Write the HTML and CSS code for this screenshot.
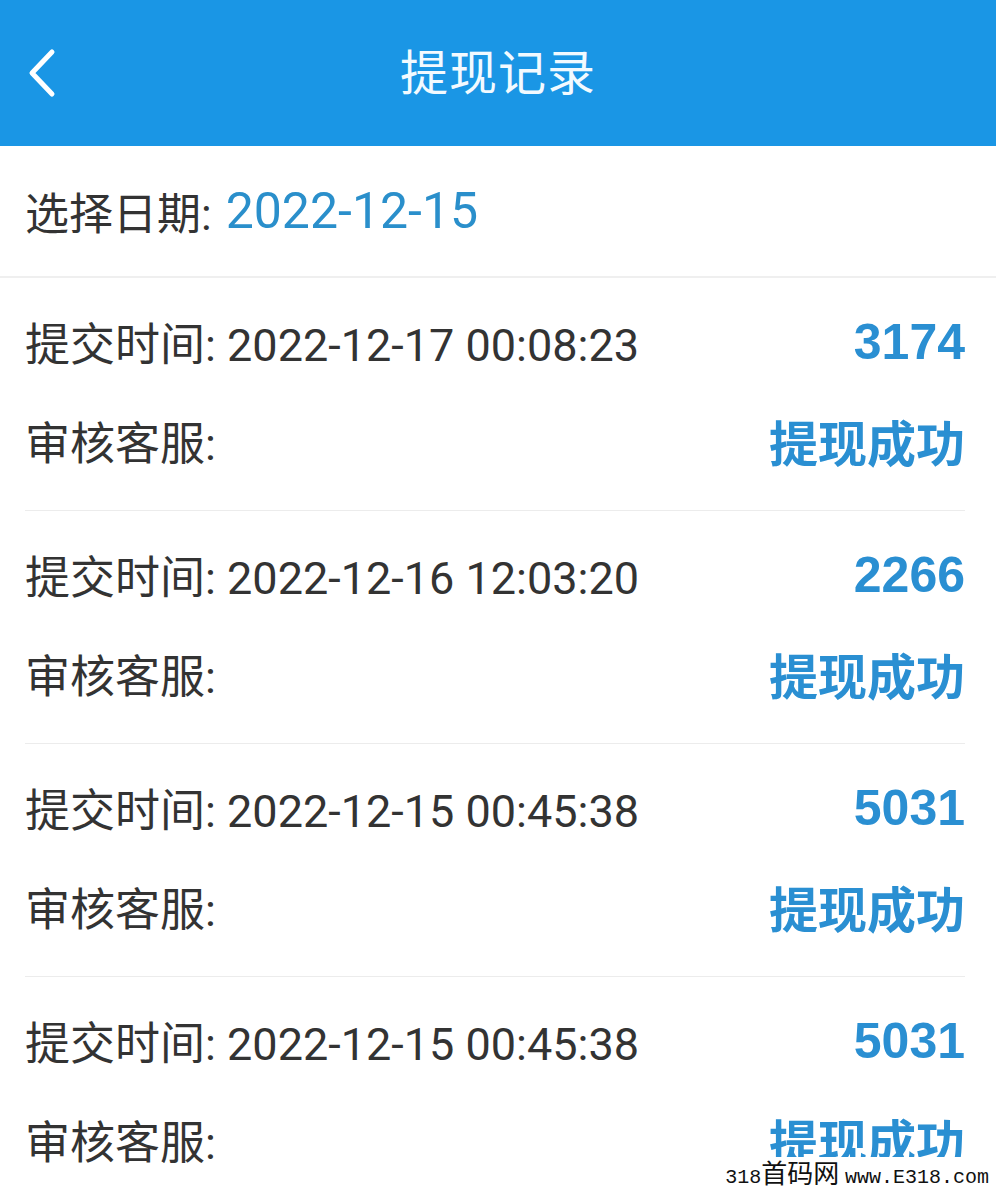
FILE: index.html
```html
<!DOCTYPE html>
<html>
<head>
  <meta charset="UTF-8">
  <meta name="viewport" content="width=device-width, initial-scale=1.0">
  <title>提现记录</title>
  <link rel="stylesheet" href="styles.css">
</head>
<body>
  <div class="app">
    <div class="topbar">
      <button class="back" aria-label="返回">
        <svg width="36" height="52" viewBox="0 0 36 52">
          <path d="M27 5 L7 26 L27 47" fill="none" stroke="#fff" stroke-width="5" stroke-linecap="round" stroke-linejoin="round"/>
        </svg>
      </button>
      <h1>提现记录</h1>
      <span></span>
    </div>

    <div class="date-row">
      选择日期: <span class="date">2022-12-15</span>
    </div>

    <ul class="records">
      <li>
        <div class="line">
          <span>提交时间: 2022-12-17 00:08:23</span>
          <span class="amount">3174</span>
        </div>
        <div class="line">
          <span>审核客服:</span>
          <span class="status">提现成功</span>
        </div>
      </li>
      <li>
        <div class="line">
          <span>提交时间: 2022-12-16 12:03:20</span>
          <span class="amount">2266</span>
        </div>
        <div class="line">
          <span>审核客服:</span>
          <span class="status">提现成功</span>
        </div>
      </li>
      <li>
        <div class="line">
          <span>提交时间: 2022-12-15 00:45:38</span>
          <span class="amount">5031</span>
        </div>
        <div class="line">
          <span>审核客服:</span>
          <span class="status">提现成功</span>
        </div>
      </li>
      <li>
        <div class="line">
          <span>提交时间: 2022-12-15 00:45:38</span>
          <span class="amount">5031</span>
        </div>
        <div class="line">
          <span>审核客服:</span>
          <span class="status">提现成功</span>
        </div>
      </li>
    </ul>

    <div class="watermark"><span class="wm-num">318</span>首码网 <span class="wm-num">www.E318.com</span></div>
  </div>
</body>
</html>
```

FILE: styles.css
```css
body {
  margin: 0;
  padding: 0;
  background: #fff;
  font-family: Roboto, "Noto Sans CJK SC", sans-serif;
  color: #333;
}

.app {
  position: relative;
  width: 996px;
  height: 1195px;
  overflow: hidden;
}

.topbar {
  display: grid;
  grid-template-columns: 1fr auto 1fr;
  align-items: center;
  height: 146px;
  background: #1a96e5;
  color: #fff;
}

.topbar h1 {
  margin: 0 0 8px;
  font-size: 48px;
  font-weight: 400;
  letter-spacing: 1px;
  color: #f2faff;
}

.back {
  justify-self: start;
  margin-left: 25px;
  padding: 0;
  background: none;
  border: none;
  display: flex;
}

.date-row {
  height: 132px;
  padding: 0 25px;
  display: flex;
  align-items: center;
  box-sizing: border-box;
  border-bottom: 2px solid #efefef;
  font-size: 44px;
}

.date-row .date {
  color: #2a8fcb;
  margin-left: 14px;
  font-size: 50px;
}

.records {
  list-style: none;
  margin: 0;
  padding: 0;
}

.records li {
  margin: 0 31px 0 25px;
  padding: 14px 0 20px;
  border-bottom: 1px solid #ececec;
}

.line {
  display: flex;
  justify-content: space-between;
  align-items: center;
  height: 99px;
  font-size: 45px;
}

.amount {
  font-family: "Liberation Sans", Arial, sans-serif;
  font-weight: bold;
  font-size: 50px;
  color: #2a8fd2;
}

.status {
  font-weight: bold;
  font-size: 49px;
  color: #2a8fd2;
}

.watermark {
  position: absolute;
  right: 5px;
  bottom: 2px;
  padding: 0 2px;
  background: #fff;
  color: #111;
  font-family: "Noto Sans CJK SC", sans-serif;
  font-size: 26px;
  line-height: 30px;
}

.wm-num {
  font-family: "Liberation Mono", monospace;
  font-size: 20px;
}
```
